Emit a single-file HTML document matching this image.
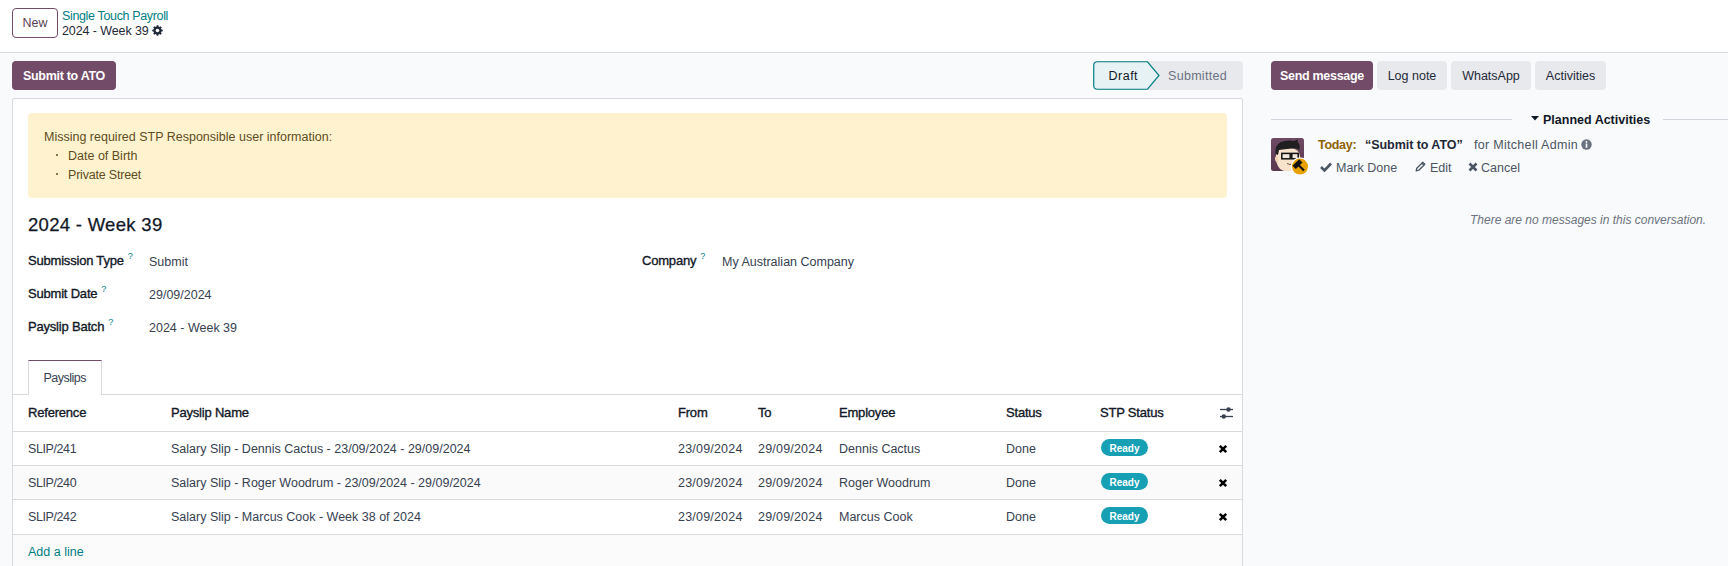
<!DOCTYPE html>
<html><head><meta charset="utf-8">
<style>
*{box-sizing:border-box;margin:0;padding:0}
html,body{width:1728px;height:566px;overflow:hidden}
body{background:#f9fafb;font-family:"Liberation Sans",sans-serif;font-size:12.5px;color:#374151;position:relative}
.a{position:absolute;white-space:nowrap;line-height:20px}
.b{font-weight:bold}
.lbl{color:#111827;font-size:13px;-webkit-text-stroke:0.35px #111827;letter-spacing:-0.2px}
.q{color:#017e84;font-size:9px;position:relative;top:-6px;margin-left:4px;-webkit-text-stroke:0;letter-spacing:0}
.btn2{position:absolute;top:61px;height:29px;background:#e7e9ed;border-radius:4px;color:#1f2937;text-align:center;line-height:30px}
</style></head><body>
<!-- control panel -->
<div style="position:absolute;left:0;top:0;width:1728px;height:53px;background:#fff;border-bottom:1px solid #d8dadd"></div>
<div style="position:absolute;left:12px;top:8px;width:46px;height:30px;border:1px solid #714b67;border-radius:4px;color:#5e3f57;text-align:center;line-height:28px">New</div>
<div class="a" style="left:62px;top:5.5px;color:#017e84;letter-spacing:-0.35px">Single Touch Payroll</div>
<div class="a" style="left:62px;top:20.5px;color:#1f2937;letter-spacing:-0.1px">2024 - Week 39</div>
<svg style="position:absolute;left:151.7px;top:24.8px" width="11" height="11" viewBox="0 0 12 12"><g fill="#1f2937"><circle cx="6" cy="6" r="4.3"/><rect x="4.9" y="0.3" width="2.2" height="11.4" rx="0.5"/><rect x="0.3" y="4.9" width="11.4" height="2.2" rx="0.5"/><rect x="4.9" y="0.3" width="2.2" height="11.4" rx="0.5" transform="rotate(45 6 6)"/><rect x="4.9" y="0.3" width="2.2" height="11.4" rx="0.5" transform="rotate(-45 6 6)"/></g><circle cx="6" cy="6" r="2" fill="#fff"/></svg>

<!-- action button -->
<div style="position:absolute;left:12px;top:61px;width:104px;height:29px;background:#714b67;border-radius:4px;color:#fff;font-weight:bold;text-align:center;line-height:31px;letter-spacing:-0.3px">Submit to ATO</div>

<!-- statusbar -->
<div style="position:absolute;left:1093px;top:61px;width:150px;height:29px;background:#e7e9ed;border-radius:4px"></div>
<svg style="position:absolute;left:1093px;top:61px" width="70" height="29" viewBox="0 0 70 29"><path d="M4.5 0.75 H54.5 L66 14.5 L54.5 28.25 H4.5 Q0.75 28.25 0.75 24.5 V4.5 Q0.75 0.75 4.5 0.75 Z" fill="#e6f2f3" stroke="#017e84" stroke-width="1.2"/></svg>
<div class="a" style="left:1108.5px;top:66px;color:#111827;letter-spacing:0.5px">Draft</div>
<div class="a" style="left:1168px;top:66px;color:#6b7280;letter-spacing:0.3px">Submitted</div>

<!-- sheet -->
<div style="position:absolute;left:12px;top:98px;width:1231px;height:520px;background:#fff;border:1px solid #d8dadd;border-radius:2px"></div>

<!-- alert -->
<div style="position:absolute;left:28px;top:113px;width:1199px;height:85px;background:#fff3cf;border-radius:4px"></div>
<div class="a" style="left:44px;top:127px;color:#5e4d22">Missing required STP Responsible user information:</div>
<div style="position:absolute;left:56px;top:154px;width:2px;height:2px;background:#614c17;border-radius:1px"></div>
<div class="a" style="left:68px;top:146px;color:#5e4d22">Date of Birth</div>
<div style="position:absolute;left:56px;top:173px;width:2px;height:2px;background:#614c17;border-radius:1px"></div>
<div class="a" style="left:68px;top:165px;color:#5e4d22;letter-spacing:-0.2px">Private Street</div>

<!-- title -->
<div class="a" style="left:28px;top:212px;font-size:18.5px;line-height:26px;color:#111827;letter-spacing:0.3px;-webkit-text-stroke:0.25px #111827">2024 - Week 39</div>

<!-- fields -->
<div class="a lbl" style="left:28px;top:251px">Submission Type<span class="q">?</span></div>
<div class="a" style="left:149px;top:252px">Submit</div>
<div class="a lbl" style="left:28px;top:284px">Submit Date<span class="q">?</span></div>
<div class="a" style="left:149px;top:285px">29/09/2024</div>
<div class="a lbl" style="left:28px;top:317px">Payslip Batch<span class="q">?</span></div>
<div class="a" style="left:149px;top:318px">2024 - Week 39</div>
<div class="a lbl" style="left:642px;top:251px">Company<span class="q">?</span></div>
<div class="a" style="left:722px;top:252px">My Australian Company</div>

<!-- tabs -->
<div style="position:absolute;left:13px;top:394px;width:1229px;height:1px;background:#d8dadd"></div>
<div style="position:absolute;left:28px;top:360px;width:74px;height:35px;background:#fff;border:1px solid #d8dadd;border-top:1px solid #714b67;border-bottom:none"></div>
<div class="a" style="left:43.5px;top:368px;letter-spacing:-0.5px">Payslips</div>

<!-- table -->
<div style="position:absolute;left:13px;top:431px;width:1229px;height:1px;background:#d8dadd"></div>
<div style="position:absolute;left:13px;top:465px;width:1229px;height:1px;background:#d8dadd"></div>
<div style="position:absolute;left:13px;top:466px;width:1229px;height:33px;background:#fafafa"></div>
<div style="position:absolute;left:13px;top:499px;width:1229px;height:1px;background:#d8dadd"></div>
<div style="position:absolute;left:13px;top:534px;width:1229px;height:1px;background:#d8dadd"></div>
<div style="position:absolute;left:13px;top:535px;width:1229px;height:40px;background:#fbfbfb"></div>

<div class="a lbl" style="left:28px;top:403px">Reference</div>
<div class="a lbl" style="left:171px;top:403px">Payslip Name</div>
<div class="a lbl" style="left:678px;top:403px">From</div>
<div class="a lbl" style="left:758px;top:403px">To</div>
<div class="a lbl" style="left:839px;top:403px">Employee</div>
<div class="a lbl" style="left:1006px;top:403px">Status</div>
<div class="a lbl" style="left:1100px;top:403px">STP Status</div>
<svg style="position:absolute;left:1219px;top:406px" width="15" height="14" viewBox="0 0 15 14"><g stroke="#374151" stroke-width="1.3"><line x1="1" y1="3.5" x2="14" y2="3.5"/><line x1="1" y1="10.5" x2="14" y2="10.5"/></g><g fill="#374151"><circle cx="9.5" cy="3.5" r="2.2"/><circle cx="4.8" cy="10.5" r="2.2"/></g></svg>

<div class="a" style="left:28px;top:439px;letter-spacing:-0.4px">SLIP/241</div>
<div class="a" style="left:171px;top:439px">Salary Slip - Dennis Cactus - 23/09/2024 - 29/09/2024</div>
<div class="a" style="left:678px;top:439px;letter-spacing:0.2px">23/09/2024</div>
<div class="a" style="left:758px;top:439px;letter-spacing:0.2px">29/09/2024</div>
<div class="a" style="left:839px;top:439px">Dennis Cactus</div>
<div class="a" style="left:1006px;top:439px">Done</div>

<div class="a" style="left:28px;top:473px;letter-spacing:-0.4px">SLIP/240</div>
<div class="a" style="left:171px;top:473px">Salary Slip - Roger Woodrum - 23/09/2024 - 29/09/2024</div>
<div class="a" style="left:678px;top:473px;letter-spacing:0.2px">23/09/2024</div>
<div class="a" style="left:758px;top:473px;letter-spacing:0.2px">29/09/2024</div>
<div class="a" style="left:839px;top:473px">Roger Woodrum</div>
<div class="a" style="left:1006px;top:473px">Done</div>

<div class="a" style="left:28px;top:507px;letter-spacing:-0.4px">SLIP/242</div>
<div class="a" style="left:171px;top:507px">Salary Slip - Marcus Cook - Week 38 of 2024</div>
<div class="a" style="left:678px;top:507px;letter-spacing:0.2px">23/09/2024</div>
<div class="a" style="left:758px;top:507px;letter-spacing:0.2px">29/09/2024</div>
<div class="a" style="left:839px;top:507px">Marcus Cook</div>
<div class="a" style="left:1006px;top:507px">Done</div>

<div style="position:absolute;left:1101px;top:439px;width:47px;height:17px;border-radius:9px;background:#17a0b4;color:#fff;font-weight:bold;font-size:10px;line-height:19px;text-align:center">Ready</div>
<div style="position:absolute;left:1101px;top:473px;width:47px;height:17px;border-radius:9px;background:#17a0b4;color:#fff;font-weight:bold;font-size:10px;line-height:19px;text-align:center">Ready</div>
<div style="position:absolute;left:1101px;top:507px;width:47px;height:17px;border-radius:9px;background:#17a0b4;color:#fff;font-weight:bold;font-size:10px;line-height:19px;text-align:center">Ready</div>

<svg style="position:absolute;left:1218px;top:444px" width="10" height="10" viewBox="0 0 10 10"><path d="M1.8 1.8 L8.2 8.2 M8.2 1.8 L1.8 8.2" stroke="#000" stroke-width="2.5" stroke-linecap="butt"/></svg>
<svg style="position:absolute;left:1218px;top:478px" width="10" height="10" viewBox="0 0 10 10"><path d="M1.8 1.8 L8.2 8.2 M8.2 1.8 L1.8 8.2" stroke="#000" stroke-width="2.5" stroke-linecap="butt"/></svg>
<svg style="position:absolute;left:1218px;top:512px" width="10" height="10" viewBox="0 0 10 10"><path d="M1.8 1.8 L8.2 8.2 M8.2 1.8 L1.8 8.2" stroke="#000" stroke-width="2.5" stroke-linecap="butt"/></svg>

<div class="a" style="left:28px;top:542px;color:#017e84">Add a line</div>

<!-- chatter -->
<div style="position:absolute;left:1271px;top:61px;width:102px;height:29px;background:#714b67;border-radius:4px;color:#fff;font-weight:bold;text-align:center;line-height:30px;letter-spacing:-0.3px">Send message</div>
<div class="btn2" style="left:1377px;width:70px">Log note</div>
<div class="btn2" style="left:1451px;width:80px">WhatsApp</div>
<div class="btn2" style="left:1535px;width:71px">Activities</div>

<div style="position:absolute;left:1271px;top:119px;width:241px;height:1px;background:#d1d5db"></div>
<div style="position:absolute;left:1663px;top:119px;width:65px;height:1px;background:#d1d5db"></div>
<svg style="position:absolute;left:1531px;top:116px" width="8" height="5" viewBox="0 0 8 5"><path d="M0 0 H8 L4 4.5 Z" fill="#111827"/></svg>
<div class="a b" style="left:1543px;top:110px;color:#111827;letter-spacing:0px">Planned Activities</div>

<!-- avatar -->
<svg style="position:absolute;left:1271px;top:138px" width="40" height="40" viewBox="0 0 40 40">
<defs><linearGradient id="ag" x1="0" y1="0" x2="0" y2="1"><stop offset="0" stop-color="#6f4a64"/><stop offset="1" stop-color="#5a3850"/></linearGradient></defs>
<rect x="0" y="0" width="33" height="33" rx="2.5" fill="url(#ag)"/>
<path d="M5 17 Q4.5 26 9 31 Q13 34 19 33 L26 33 Q29 27 29 18 Q28 11 20 10 Q9 9 6 13 Z" fill="#f7e2cc"/>
<path d="M4.5 23 Q3 19 5.5 18 L7 19 L7 26 Z" fill="#f2d3b6"/>
<path d="M4.5 16 Q3.5 7 10 4 Q16 1.5 23 3 L27 1.5 L26.5 4 Q29.5 6 28.5 12 Q26 9.5 21 10.5 Q13 11 8 12 L7 17 Z" fill="#1f1f22"/>
<rect x="10.8" y="15.4" width="8.4" height="5.4" fill="#f3e6dc" stroke="#111" stroke-width="1.5"/>
<rect x="20.8" y="15.4" width="6.4" height="5.4" fill="#f3e6dc" stroke="#111" stroke-width="1.5"/>
<line x1="19.2" y1="17" x2="20.8" y2="17" stroke="#111" stroke-width="1.2"/>
<path d="M16 25.5 Q19 27.5 22 25.5" stroke="#6b4a3a" stroke-width="0.9" fill="none"/>
<circle cx="29" cy="28.6" r="9.3" fill="#fff"/>
<circle cx="29" cy="28.6" r="8" fill="#e6a000"/>
<g transform="rotate(-45 29 28.6)"><rect x="24.3" y="22.8" width="9.4" height="4.6" fill="#111"/><rect x="27.9" y="26" width="2.2" height="8.2" fill="#111"/></g>
</svg>

<div class="a b" style="left:1318px;top:134.5px;color:#8f6200;letter-spacing:-0.3px">Today:</div>
<div class="a b" style="left:1365px;top:134.5px;color:#1f2937;letter-spacing:-0.05px">“Submit to ATO”</div>
<div class="a" style="left:1474px;top:134.5px;color:#4b5563;letter-spacing:0.3px">for Mitchell Admin</div>
<svg style="position:absolute;left:1581px;top:139px" width="11" height="11" viewBox="0 0 11 11"><circle cx="5.5" cy="5.5" r="5.2" fill="#6b7280"/><rect x="4.7" y="4.5" width="1.6" height="4.2" fill="#fff"/><circle cx="5.5" cy="2.9" r="0.9" fill="#fff"/></svg>

<svg style="position:absolute;left:1320px;top:162px" width="12" height="10" viewBox="0 0 12 10"><path d="M1 5 L4.5 8.5 L11 1.5" stroke="#4b5563" stroke-width="2.6" fill="none"/></svg>
<div class="a" style="left:1336px;top:158px;color:#4b5563">Mark Done</div>
<svg style="position:absolute;left:1415px;top:161px" width="11" height="11" viewBox="0 0 11 11"><path d="M1.2 9.8 L1.8 7.2 L7.8 1.2 L9.8 3.2 L3.8 9.2 Z" fill="none" stroke="#4b5563" stroke-width="1.3" stroke-linejoin="round"/><path d="M6.8 2.2 L8.8 4.2" stroke="#4b5563" stroke-width="1.2"/></svg>
<div class="a" style="left:1430px;top:158px;color:#4b5563">Edit</div>
<svg style="position:absolute;left:1468px;top:162px" width="10" height="10" viewBox="0 0 10 10"><path d="M1.5 1.5 L8.5 8.5 M8.5 1.5 L1.5 8.5" stroke="#4b5563" stroke-width="2.6"/></svg>
<div class="a" style="left:1481px;top:158px;color:#4b5563">Cancel</div>

<div class="a" style="left:1470px;top:210px;color:#6b7280;font-style:italic;font-size:12px">There are no messages in this conversation.</div>
</body></html>
